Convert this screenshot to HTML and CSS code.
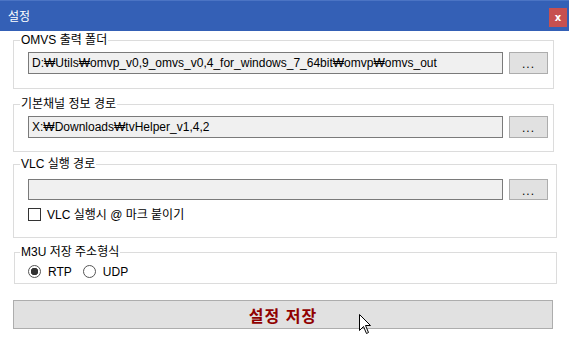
FILE: index.html
```html
<!DOCTYPE html>
<html lang="ko">
<head>
    <meta charset="UTF-8">
    <meta name="viewport" content="width=device-width, initial-scale=1.0">
    <title>설정</title>
    <link rel="stylesheet" href="styles.css">
</head>
<body>
    <div class="window">
        <div class="titlebar">
            <span class="title">설정</span>
            <button class="close">x</button>
        </div>

        <div class="content">
            <!-- OMVS 출력 폴더 -->
            <fieldset class="group group-omvs">
                <legend>OMVS 출력 폴더</legend>
                <div class="path-row">
                    <input class="path" type="text" value="D:₩Utils₩omvp_v0,9_omvs_v0,4_for_windows_7_64bit₩omvp₩omvs_out" readonly>
                    <button class="browse">...</button>
                </div>
            </fieldset>

            <!-- 기본채널 정보 경로 -->
            <fieldset class="group group-channel">
                <legend>기본채널 정보 경로</legend>
                <div class="path-row">
                    <input class="path" type="text" value="X:₩Downloads₩tvHelper_v1,4,2" readonly>
                    <button class="browse">...</button>
                </div>
            </fieldset>

            <!-- VLC 실행 경로 -->
            <fieldset class="group group-vlc">
                <legend>VLC 실행 경로</legend>
                <div class="path-row">
                    <input class="path path-short" type="text" value="" readonly>
                    <button class="browse browse-short">...</button>
                </div>
                <label class="check-row">
                    <input class="check" type="checkbox">
                    <span>VLC 실행시 @ 마크 붙이기</span>
                </label>
            </fieldset>

            <!-- M3U 저장 주소형식 -->
            <fieldset class="group group-m3u">
                <legend>M3U 저장 주소형식</legend>
                <div class="radio-row">
                    <label class="radio-item"><input class="radio" type="radio" name="addr" checked><span>RTP</span></label>
                    <label class="radio-item"><input class="radio" type="radio" name="addr"><span>UDP</span></label>
                </div>
            </fieldset>

            <button class="save">설정 저장</button>
        </div>

        <svg class="cursor" width="13" height="21" viewBox="0 0 13 21">
            <path d="M0.5 0.5 L0.5 16.5 L4.5 12.5 L7.5 19.5 L9.5 18.5 L6.5 11.5 L11.5 11.5 Z" fill="#fff" stroke="#000" stroke-width="1"/>
        </svg>
    </div>
</body>
</html>
```

FILE: styles.css
```css
body {
    margin: 0;
    background-color: #fff;
    font-family: "Liberation Sans", "Noto Sans CJK KR", sans-serif;
    font-size: 12px;
    color: #000;
}
.window {
    position: relative;
    width: 569px;
    height: 347px;
    overflow: hidden;
}
.titlebar {
    display: flex;
    justify-content: space-between;
    align-items: flex-start;
    height: 30px;
    background-color: #3460b6;
    border-top: 1px solid #4b74c4;
}
.title {
    margin: 7px 0 0 8px;
    color: #fff;
    font-family: "Noto Sans CJK KR", sans-serif;
    font-size: 12px;
    line-height: 16px;
}
.close {
    width: 18px;
    height: 19px;
    margin: 7px 2px 0 0;
    padding: 0;
    border: none;
    background-color: #c75050;
    color: #fff;
    font-family: "DejaVu Sans", sans-serif;
    font-size: 10px;
    font-weight: bold;
    line-height: 19px;
}
.content {
    display: flex;
    flex-direction: column;
    padding: 2px 12px 0 13px;
}
.group {
    margin: 0;
    padding: 5px 8px 13px 14px;
    min-width: 0;
    border: 1px solid #dcdcdc;
}
.group legend {
    margin-left: -8px;
    padding: 0 1px;
    font-size: 12px;
    line-height: 14px;
}
.group-omvs {
    margin-right: 3px;
    padding-right: 5px;
    padding-bottom: 14px;
}
.group-channel {
    margin-top: 8px;
    margin-right: 3px;
    padding-right: 5px;
}
.group-vlc {
    margin-top: 5px;
    padding-top: 8px;
    padding-bottom: 16px;
}
.group-m3u {
    margin-top: 7px;
    margin-left: 1px;
    padding: 6px 8px 5px 13px;
}
.path-row {
    display: flex;
    gap: 6px;
}
.path {
    box-sizing: border-box;
    width: 476px;
    height: 22px;
    margin: 0;
    padding: 0 3px;
    border: 1px solid #7a7a7a;
    background-color: #f0f0f0;
    font-family: "Liberation Sans", "DejaVu Sans", sans-serif;
    font-size: 12px;
    color: #000;
    outline: none;
}
.path-short {
    height: 21px;
}
.browse {
    box-sizing: border-box;
    width: 39px;
    height: 22px;
    margin: 0;
    padding: 2px 0 0;
    border: 1px solid #adadad;
    background-color: #e1e1e1;
    font-family: "Liberation Sans", sans-serif;
    font-size: 12px;
    letter-spacing: 1px;
    color: #000;
}
.browse-short {
    height: 21px;
}
.check-row {
    display: flex;
    align-items: center;
    gap: 6px;
    margin-top: 8px;
    height: 13px;
    line-height: 14px;
}
.check {
    appearance: none;
    box-sizing: border-box;
    width: 13px;
    height: 13px;
    margin: 0;
    border: 1px solid #333;
    background-color: #fff;
}
.radio-row {
    display: flex;
    gap: 11px;
    height: 13px;
}
.radio-item {
    display: flex;
    align-items: center;
    gap: 7px;
    line-height: 14px;
}
.radio {
    appearance: none;
    box-sizing: border-box;
    width: 13px;
    height: 13px;
    margin: 0;
    border: 1px solid #555;
    border-radius: 50%;
    background-color: #fff;
}
.radio:checked {
    background: radial-gradient(circle, #333 0, #333 3.5px, #fff 4px);
}
.save {
    box-sizing: border-box;
    height: 29px;
    margin: 16px 4px 0 0;
    border: 1px solid #adadad;
    background-color: #e1e1e1;
    color: #900000;
    font-family: "Noto Sans CJK KR", sans-serif;
    font-size: 16px;
    font-weight: 600;
    letter-spacing: 1px;
    line-height: 27px;
}
.cursor {
    position: absolute;
    left: 359px;
    top: 314px;
}
```
